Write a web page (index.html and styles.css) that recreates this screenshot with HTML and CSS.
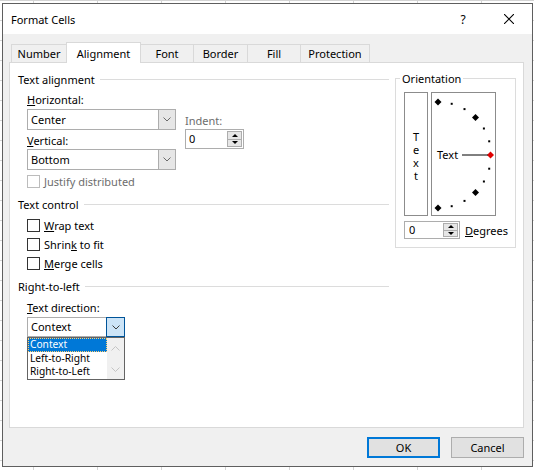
FILE: index.html
```html
<!DOCTYPE html>
<html lang="en">

<head>
  <meta charset="UTF-8">
  <title>Format Cells</title>
  <link rel="stylesheet" href="styles.css">
</head>

<body>

  <div class="window">
    <div class="titlebar">
      <span class="title">Format Cells</span>
      <span class="tb-btn">?</span>
      <span class="tb-btn">
        <svg width="10" height="10" viewBox="0 0 10 10">
          <path d="M0 0 L10 10 M10 0 L0 10" stroke="#000" stroke-width="1.1" fill="none" />
        </svg>
      </span>
    </div>

    <div class="tabs">
      <div class="tab tab-number">Number</div>
      <div class="tab tab-alignment active">Alignment</div>
      <div class="tab tab-font">Font</div>
      <div class="tab tab-border">Border</div>
      <div class="tab tab-fill">Fill</div>
      <div class="tab tab-protection">Protection</div>
    </div>

    <div class="panel">
      <div class="left">
        <div class="group-title">Text alignment</div>

        <div class="align-row indent">
          <div class="align-col">
            <div class="label"><u>H</u>orizontal:</div>
            <div class="combo">
              <span class="combo-text">Center</span>
              <span class="combo-btn">
                <svg width="8" height="5" viewBox="0 0 8 5"><path d="M0.5 0.5 L4 4 L7.5 0.5" stroke="#6a6a6a" fill="none" /></svg>
              </span>
            </div>
            <div class="label vlabel"><u>V</u>ertical:</div>
            <div class="combo second">
              <span class="combo-text">Bottom</span>
              <span class="combo-btn">
                <svg width="8" height="5" viewBox="0 0 8 5"><path d="M0.5 0.5 L4 4 L7.5 0.5" stroke="#6a6a6a" fill="none" /></svg>
              </span>
            </div>
          </div>
          <div class="indent-col">
            <div class="label gray">Indent:</div>
            <div class="spin indent-spin">
              <span class="spin-text">0</span>
              <span class="spin-btns">
                <span class="spin-btn"><i class="arrow-up"></i></span>
                <span class="spin-btn"><i class="arrow-down"></i></span>
              </span>
            </div>
          </div>
        </div>

        <div class="check-row disabled justify indent"><span class="box"></span>Justify distributed</div>

        <div class="group-title section">Text control</div>
        <div class="check-list indent">
          <div class="check-row"><span class="box"></span><span><u>W</u>rap text</span></div>
          <div class="check-row"><span class="box"></span><span>Shrin<u>k</u> to fit</span></div>
          <div class="check-row"><span class="box"></span><span><u>M</u>erge cells</span></div>
        </div>

        <div class="group-title section">Right-to-left</div>
        <div class="label dir-label indent"><u>T</u>ext direction:</div>
        <div class="dir-wrap indent">
          <div class="combo narrow">
            <span class="combo-text">Context</span>
            <span class="combo-btn hot">
              <svg width="8" height="5" viewBox="0 0 8 5"><path d="M0.5 0.5 L4 4 L7.5 0.5" stroke="#3c3c3c" fill="none" /></svg>
            </span>
          </div>
          <div class="dropdown">
            <ul class="items">
              <li class="selected">Context</li>
              <li>Left-to-Right</li>
              <li>Right-to-Left</li>
            </ul>
            <div class="scrollbar">
              <svg width="9" height="5" viewBox="0 0 9 5"><path d="M0.5 4.5 L4.5 0.5 L8.5 4.5" stroke="#c4c4c4" fill="none" /></svg>
              <svg width="9" height="5" viewBox="0 0 9 5"><path d="M0.5 0.5 L4.5 4.5 L8.5 0.5" stroke="#c4c4c4" fill="none" /></svg>
            </div>
          </div>
        </div>
      </div>

      <fieldset class="orientation">
        <legend>Orientation</legend>
        <div class="orient-row">
          <div class="vertical-text">
            <span class="upright">Text</span>
          </div>
          <div class="dial">
            <svg width="63" height="122" viewBox="0 0 63 122">
              <!-- diamonds every 45deg, dots between -->
              <polygon points="6,5.5 9.5,9 6,12.5 2.5,9" fill="#000" />
              <rect x="18.7" y="9.8" width="2" height="2" fill="#000" />
              <rect x="31.5" y="15.1" width="2" height="2" fill="#000" />
              <polygon points="43.5,21 47,24.5 43.5,28 40,24.5" fill="#000" />
              <rect x="50.9" y="34.5" width="2" height="2" fill="#000" />
              <rect x="56.2" y="47.3" width="2" height="2" fill="#000" />
              <polygon points="58.5,58.5 62,62 58.5,65.5 55,62" fill="#e00000" />
              <rect x="56.2" y="74.7" width="2" height="2" fill="#000" />
              <rect x="50.9" y="87.5" width="2" height="2" fill="#000" />
              <polygon points="43.5,96 47,99.5 43.5,103 40,99.5" fill="#000" />
              <rect x="31.5" y="106.9" width="2" height="2" fill="#000" />
              <rect x="18.7" y="112.2" width="2" height="2" fill="#000" />
              <polygon points="6,111.5 9.5,115 6,118.5 2.5,115" fill="#000" />
              <text x="5" y="66" class="dial-text">Text</text>
              <line x1="30" y1="62" x2="56" y2="62" stroke="#000" stroke-width="1" />
            </svg>
          </div>
        </div>
        <div class="degrees-row">
          <div class="spin deg-spin">
            <span class="spin-text">0</span>
            <span class="spin-btns">
              <span class="spin-btn"><i class="arrow-up"></i></span>
              <span class="spin-btn"><i class="arrow-down"></i></span>
            </span>
          </div>
          <span><u>D</u>egrees</span>
        </div>
      </fieldset>
    </div>

    <div class="buttons">
      <button class="btn default">OK</button>
      <button class="btn">Cancel</button>
    </div>
  </div>

</body>

</html>
```

FILE: styles.css
```css
html,
body {
  margin: 0;
}

body {
  width: 534px;
  height: 470px;
  overflow: hidden;
  font-family: "Noto Sans", sans-serif;
  font-size: 11px;
  line-height: 15px;
  color: #000;
  /* excel sheet peeking out behind the dialog */
  background-color: #fff;
  background-image:
    linear-gradient(to right, #d4d4d4 1px, transparent 1px),
    linear-gradient(to bottom, #d4d4d4 1px, transparent 1px);
  background-size: 64px 20px;
  background-position: 33px 0;
}

.window {
  box-sizing: border-box;
  width: 531px;
  height: 464px;
  margin: 3px 0 0 2px;
  border: 1px solid #5f5f5f;
  background: #f0f0f0;
  display: flex;
  flex-direction: column;
}

/* title bar */
.titlebar {
  height: 30px;
  flex: none;
  background: #fff;
  display: flex;
  align-items: center;
}

.title {
  flex: 1;
  padding-left: 8px;
}

.tb-btn {
  width: 46px;
  height: 30px;
  display: flex;
  align-items: center;
  justify-content: center;
  font-size: 12px;
}

/* tabs */
.tabs {
  height: 20px;
  margin: 8px 0 0 8px;
  display: flex;
  align-items: flex-end;
  position: relative;
  z-index: 1;
}

.tab {
  box-sizing: border-box;
  height: 18px;
  padding-top: 1px;
  border: 1px solid #d9d9d9;
  border-bottom: none;
  text-align: center;
  background: #f0f0f0;
}

.tab + .tab {
  margin-left: -1px;
}

.tab.active {
  height: 21px;
  padding-top: 3px;
  margin-bottom: -1px;
  background: #fff;
  position: relative;
}

.tab-number { width: 56px; }
.tab-alignment { width: 75px; }
.tab-font { width: 54px; }
.tab-border { width: 55px; }
.tab-fill { width: 54px; }
.tab-protection { width: 70px; }

/* main panel */
.panel {
  box-sizing: border-box;
  width: 515px;
  height: 366px;
  flex: none;
  margin-left: 6px;
  padding-left: 8px;
  border: 1px solid #d9d9d9;
  background: #fff;
  display: flex;
  align-items: flex-start;
}

.left {
  width: 371px;
  padding-top: 9px;
}

.indent {
  margin-left: 9px;
}

.group-title {
  display: flex;
  align-items: center;
}

.group-title::after {
  content: "";
  flex: 1;
  height: 1px;
  margin-left: 5px;
  background: #dcdcdc;
}

.group-title.section {
  margin-top: 8px;
}

.gray,
.disabled {
  color: #6d6d6d;
}

.align-row {
  display: flex;
  gap: 9px;
  margin-top: 5px;
}

.align-col {
  width: 149px;
}

.vlabel {
  margin-top: 3px;
}

/* combo boxes */
.combo {
  box-sizing: border-box;
  height: 21px;
  margin-top: 2px;
  border: 1px solid #adadad;
  background: #fff;
  display: flex;
}

.combo.second {
  margin-top: 1px;
}

.combo-text {
  flex: 1;
  padding-left: 3px;
  line-height: 19px;
}

.combo-btn {
  width: 16px;
  border-left: 1px solid #adadad;
  background: #e6e6e6;
  display: flex;
  align-items: center;
  justify-content: center;
}

.combo.narrow {
  width: 98px;
  height: 20px;
  margin-top: 0;
}

.combo.narrow .combo-text {
  line-height: 18px;
}

.combo-btn.hot {
  margin: -1px -1px -1px 0;
  width: 17px;
  border: 1px solid #005499;
  background: #cce4f7;
}

/* spinners */
.indent-col {
  width: 59px;
  margin-top: 21px;
}

.spin {
  box-sizing: border-box;
  height: 20px;
  margin-top: 1px;
  border: 1px solid #adadad;
  background: #fff;
  display: flex;
}

.spin-text {
  flex: 1;
  padding-left: 3px;
  line-height: 18px;
}

.spin-btns {
  width: 15px;
  padding: 1px 1px 1px 0;
  display: flex;
  flex-direction: column;
}

.spin-btn {
  flex: 1;
  border: 1px solid #adadad;
  background: #e6e6e6;
  display: flex;
  align-items: center;
  justify-content: center;
}

.spin-btn + .spin-btn {
  border-top: none;
}

.arrow-up,
.arrow-down {
  width: 0;
  height: 0;
  border-left: 3px solid transparent;
  border-right: 3px solid transparent;
}

.arrow-up {
  border-bottom: 3px solid #000;
}

.arrow-down {
  border-top: 3px solid #000;
}

/* checkboxes */
.check-row {
  height: 15px;
  display: flex;
  align-items: center;
  gap: 4px;
}

.box {
  box-sizing: border-box;
  width: 13px;
  height: 13px;
  border: 1px solid #333;
  background: #fff;
}

.disabled .box {
  border-color: #bcbcbc;
}

.justify {
  margin-top: 4px;
}

.check-list {
  margin-top: 6px;
  display: flex;
  flex-direction: column;
  gap: 4px;
}

.dir-label {
  margin-top: 6px;
}

/* text direction combo with its open list */
.dir-wrap {
  margin-top: 2px;
  position: relative;
}

.dropdown {
  position: absolute;
  top: 20px;
  left: 0;
  box-sizing: border-box;
  width: 98px;
  height: 43px;
  border: 1px solid #646464;
  background: #fff;
  display: flex;
}

.items {
  flex: 1;
  margin: 0;
  padding: 0;
  list-style: none;
  font-size: 10.2px;
  line-height: 13.7px;
}

.items li {
  height: 13.7px;
  padding-left: 2px;
}

.items li.selected {
  background: #0078d7;
  color: #fff;
  outline: 1px dotted #ffcf70;
  outline-offset: -1px;
}

.scrollbar {
  width: 17px;
  background: #f0f0f0;
  display: flex;
  flex-direction: column;
  align-items: center;
  justify-content: space-between;
  padding: 8px 0 7px;
  box-sizing: border-box;
}

/* orientation group */
.orientation {
  box-sizing: border-box;
  width: 121px;
  min-width: 0;
  margin: 8px 0 0 6px;
  padding: 6px 7px 8px 8px;
  border: 1px solid #dcdcdc;
}

.orientation legend {
  padding: 0 2px;
  margin-left: -4px;
}

.orient-row {
  display: flex;
  gap: 3px;
}

.vertical-text {
  box-sizing: border-box;
  width: 24px;
  height: 124px;
  padding-top: 2px;
  border: 1px solid #8c8c8c;
  display: flex;
  align-items: center;
  justify-content: center;
}

.upright {
  writing-mode: vertical-lr;
  text-orientation: upright;
  line-height: 15px;
  letter-spacing: -2px;
}

.dial {
  box-sizing: border-box;
  width: 65px;
  height: 124px;
  border: 1px solid #8c8c8c;
}

.dial svg {
  display: block;
}

.dial-text {
  font-family: "Noto Sans", sans-serif;
  font-size: 11px;
}

.degrees-row {
  margin-top: 5px;
  display: flex;
  align-items: center;
  gap: 5px;
}

.deg-spin {
  width: 57px;
  height: 18px;
  margin-top: 0;
}

.deg-spin .spin-text {
  line-height: 16px;
  padding-left: 4px;
}

/* bottom buttons */
.buttons {
  display: flex;
  justify-content: flex-end;
  gap: 11px;
  padding: 9px 8px 0 0;
}

.btn {
  box-sizing: border-box;
  width: 73px;
  height: 21px;
  padding: 0;
  border: 1px solid #adadad;
  background: #e1e1e1;
  font: inherit;
  color: #000;
}

.btn.default {
  border: 2px solid #0078d7;
}
```
